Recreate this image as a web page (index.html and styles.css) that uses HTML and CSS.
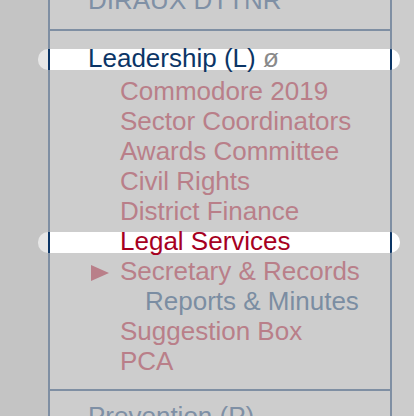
FILE: index.html
```html
<!DOCTYPE html>
<html>
<head>
  <meta charset="UTF-8">
  <title>District Menu</title>
  <link rel="stylesheet" href="styles.css">
</head>
<body>
  <div class="page">
    <div class="rail"></div>

    <!-- Menu tree -->
    <div class="nav">
      <div class="group first">
        <div class="item level1 muted">DIRAUX DTTNR</div>
      </div>

      <div class="group">
        <div class="item level1 active">Leadership (L) <span class="empty">ø</span></div>
        <div class="children">
          <div class="item level2">Commodore 2019</div>
          <div class="item level2">Sector Coordinators</div>
          <div class="item level2">Awards Committee</div>
          <div class="item level2">Civil Rights</div>
          <div class="item level2">District Finance</div>
          <div class="item level2 active selected">Legal Services</div>
          <div class="item level2 open">
            <svg class="arrow" width="18" height="16" viewBox="0 0 18 16"><path d="M0 0 L18 8 L0 16 Z" fill="#b97f89"/></svg>Secretary &amp; Records
          </div>
          <div class="item level3">Reports &amp; Minutes</div>
          <div class="item level2">Suggestion Box</div>
          <div class="item level2">PCA</div>
        </div>
      </div>

      <div class="group last">
        <div class="item level1 muted">Prevention (P)</div>
      </div>
    </div>
  </div>
</body>
</html>
```

FILE: styles.css
```css
/* Dimmed side menu */
body {
  margin: 0;
  background-color: #cccccc;
  font-family: "Liberation Sans", Arial, sans-serif;
  overflow: hidden;
}
.page {
  display: flex;
  height: 416px;
  overflow: hidden;
}
.rail {
  width: 48px;
  flex: none;
  background-color: #c4c4c4;
}
.nav {
  width: 340px;
  flex: none;
  margin-top: -27px;
  border-left: 2px solid #7f8fa3;
  border-right: 2px solid #7f8fa3;
  background-color: #cdcdcd;
}
.group {
  padding: 18px 0 16px;
  border-bottom: 2px solid #7f8fa3;
}
.group.first {
  padding-bottom: 17px;
}
.group.last {
  padding-top: 16px;
  border-bottom: none;
}
.children {
  display: flex;
  flex-direction: column;
  gap: 9px;
  margin-top: 12px;
}
.item {
  font-size: 26px;
  line-height: 18px;
  height: 21px;
  white-space: nowrap;
  color: #b97f89;
}
.level1 {
  padding-left: 38px;
  color: #0b3566;
}
.level2 {
  padding-left: 70px;
}
.level3 {
  padding-left: 95px;
  color: #7b8da2;
}
.muted {
  color: #7f90a5;
}
.arrow {
  margin-left: -29px;
  margin-right: 11px;
  vertical-align: -1px;
}
.empty {
  font-size: 26px;
  color: #8a8a8a;
}
.active {
  margin-left: -12px;
  margin-right: -10px;
  padding-left: 50px;
  border-radius: 10px;
  background: linear-gradient(to right,
    #e6e6e6 10px, #0b3566 10px 12px, #ffffff 12px calc(100% - 10px),
    #0b3566 calc(100% - 10px) calc(100% - 8px), #ffffff calc(100% - 8px));
}
.level2.active {
  padding-left: 82px;
}
.selected {
  color: #a6001f;
}
```
